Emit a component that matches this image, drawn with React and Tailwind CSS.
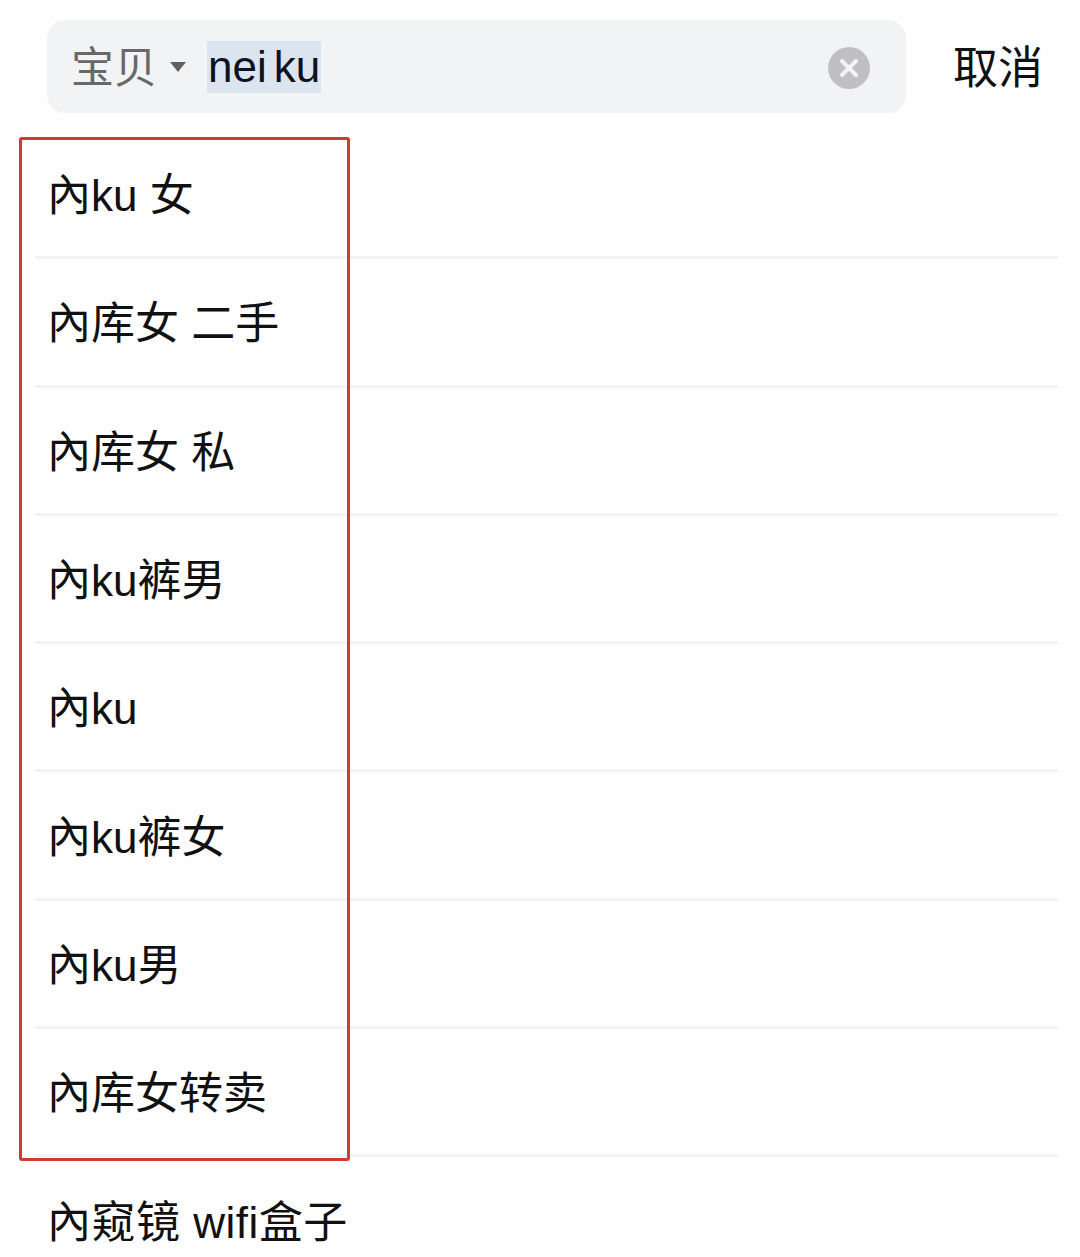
import React from "react";

// suggestion rows, top to bottom
const rows = [
  "內ku 女",
  "內库女 二手",
  "內库女 私",
  "內ku裤男",
  "內ku",
  "內ku裤女",
  "內ku男",
  "內库女转卖",
  "內窥镜 wifi盒子",
];

function ClearIcon() {
  return (
    <svg width="42" height="42" viewBox="0 0 42 42" className="shrink-0">
      <circle cx="21" cy="21" r="21" fill="#c0c0c4" />
      <path d="M14 14 L28 28 M28 14 L14 28" stroke="#f4f4f6" strokeWidth="4" strokeLinecap="round" />
    </svg>
  );
}

export default function App() {
  return (
    <div
      className="relative w-[1080px] h-[1257px] overflow-hidden bg-[#fefefe] text-[44px] leading-none text-[#111]"
      style={{ fontFamily: '"Liberation Sans", "Noto Sans CJK SC", sans-serif' }}
    >
      {/* Search bar */}
      <div className="flex items-center h-[131px] pl-[47px] pr-[37px] pb-[18px] pt-[20px]">
        <div className="flex items-center w-[859px] h-[93px] rounded-[18px] bg-[#f2f3f5] pl-[24px] pr-[36px]">
          <span className="w-[87px] pt-[4px] text-[43px] text-[#686868]">宝贝</span>
          <span className="ml-[12px] mt-[1px] w-0 h-0 border-x-[8px] border-x-transparent border-t-[10px] border-t-[#606060]" />
          <span className="ml-[21px] flex items-center h-[52px] px-[1px] bg-[#dce4ef] text-[#0d1220]">
            nei<span className="ml-[7px]">ku</span>
          </span>
          <span className="ml-auto pt-[2px]">
            <ClearIcon />
          </span>
        </div>
        <span className="ml-auto pt-[3px] text-[45px]">取消</span>
      </div>

      {/* Suggestions */}
      <ul className="pl-[35px] pr-[22px]">
        {rows.map((row) => (
          <li
            key={row}
            className="flex items-center h-[128.3px] pl-[12px] pt-[5px] border-b-[3px] border-[#f2f2f3] last:border-b-0 last:pt-[2px] last:tracking-[0.5px]"
          >
            {row}
          </li>
        ))}
      </ul>

      {/* Red annotation frame drawn over the list */}
      <div className="absolute left-[19px] top-[137px] w-[331px] h-[1024px] rounded-[3px] border-[3px] border-[#d33a2f]" />
    </div>
  );
}
